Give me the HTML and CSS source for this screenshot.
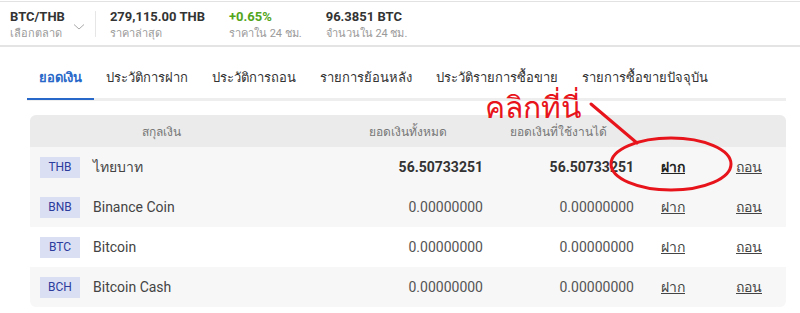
FILE: index.html
```html
<!DOCTYPE html>
<html lang="th">
<head>
    <meta charset="UTF-8">
    <meta name="viewport" content="width=device-width, initial-scale=1.0">
    <title>ยอดเงิน - BTC/THB</title>
    <link rel="stylesheet" href="styles.css">
</head>
<body>
    <!-- Market summary bar -->
    <header class="market-bar">
        <div class="market-picker">
            <div class="stat">
                <span class="stat-value">BTC/THB</span>
                <span class="stat-label">เลือกตลาด</span>
            </div>
            <svg class="chevron" width="12" height="8" viewBox="0 0 12 8">
                <path d="M1 1.5 L6 6 L11 1.5" fill="none" stroke="#aaa" stroke-width="1"/>
            </svg>
        </div>
        <div class="stat">
            <span class="stat-value">279,115.00 THB</span>
            <span class="stat-label">ราคาล่าสุด</span>
        </div>
        <div class="stat">
            <span class="stat-value up">+0.65%</span>
            <span class="stat-label">ราคาใน 24 ชม.</span>
        </div>
        <div class="stat">
            <span class="stat-value">96.3851 BTC</span>
            <span class="stat-label">จำนวนใน 24 ชม.</span>
        </div>
    </header>

    <main class="wallet">
        <nav class="tabs">
            <a href="#" class="tab active">ยอดเงิน</a>
            <a href="#" class="tab">ประวัติการฝาก</a>
            <a href="#" class="tab">ประวัติการถอน</a>
            <a href="#" class="tab">รายการย้อนหลัง</a>
            <a href="#" class="tab">ประวัติรายการซื้อขาย</a>
            <a href="#" class="tab">รายการซื้อขายปัจจุบัน</a>
        </nav>

        <div class="balances">
            <div class="row head">
                <div class="cell currency-head">สกุลเงิน</div>
                <div class="cell center">ยอดเงินทั้งหมด</div>
                <div class="cell center">ยอดเงินที่ใช้งานได้</div>
                <div class="cell"></div>
                <div class="cell"></div>
            </div>
            <div class="row shaded main-row">
                <div class="cell currency"><span class="badge">THB</span>ไทยบาท</div>
                <div class="cell num">56.50733251</div>
                <div class="cell num">56.50733251</div>
                <div class="cell"><a href="#" class="action strong">ฝาก</a></div>
                <div class="cell"><a href="#" class="action">ถอน</a></div>
            </div>
            <div class="row shaded">
                <div class="cell currency"><span class="badge">BNB</span>Binance Coin</div>
                <div class="cell num">0.00000000</div>
                <div class="cell num">0.00000000</div>
                <div class="cell"><a href="#" class="action">ฝาก</a></div>
                <div class="cell"><a href="#" class="action">ถอน</a></div>
            </div>
            <div class="row">
                <div class="cell currency"><span class="badge">BTC</span>Bitcoin</div>
                <div class="cell num">0.00000000</div>
                <div class="cell num">0.00000000</div>
                <div class="cell"><a href="#" class="action">ฝาก</a></div>
                <div class="cell"><a href="#" class="action">ถอน</a></div>
            </div>
            <div class="row shaded">
                <div class="cell currency"><span class="badge">BCH</span>Bitcoin Cash</div>
                <div class="cell num">0.00000000</div>
                <div class="cell num">0.00000000</div>
                <div class="cell"><a href="#" class="action">ฝาก</a></div>
                <div class="cell"><a href="#" class="action">ถอน</a></div>
            </div>
        </div>
    </main>

    <!-- Hand-drawn hint on top of the page -->
    <div class="hint">
        <span class="hint-text">คลิกที่นี่</span>
        <svg class="hint-marks" width="800" height="313" viewBox="0 0 800 313">
            <line x1="591" y1="104" x2="637" y2="143" stroke="#e8141c" stroke-width="3" stroke-linecap="round"/>
            <ellipse cx="671" cy="164" rx="60" ry="26" fill="none" stroke="#e8141c" stroke-width="3"/>
        </svg>
    </div>
</body>
</html>
```

FILE: styles.css
```css
/* Global */
body {
    margin: 0;
    padding: 0;
    background-color: #fff;
    color: #333;
    font-family: Roboto, "Noto Sans", sans-serif;
    position: relative;
    overflow: hidden;
}

a {
    color: inherit;
    text-decoration: none;
}

/* Market bar */
.market-bar {
    display: flex;
    align-items: center;
    height: 43px;
    margin-top: 1px;
    padding: 0 10px;
    border-top: 1px solid #e2e2e2;
    border-bottom: 2px solid #e4e4e4;
}

.market-picker {
    display: flex;
    align-items: center;
    gap: 8px;
    padding-right: 10px;
    margin-right: 14px;
    border-right: 1px solid #e6e6e6;
    height: 26px;
}

.market-bar > .stat + .stat {
    margin-left: 24px;
}

.chevron {
    margin-top: 6px;
}

.stat {
    display: flex;
    flex-direction: column;
    line-height: 17px;
    margin-top: 3px;
}

.stat-value {
    font-size: 13px;
    font-weight: bold;
    color: #333;
}

.stat-value.up {
    color: #52a51c;
}

.stat-label {
    font-size: 11px;
    color: #9a9a9a;
}

/* Wallet */
.wallet {
    padding: 0 14px 0 27px;
}

.tabs {
    display: flex;
    margin-top: 19px;
    border-bottom: 3px solid #eeeeee;
}

.tab {
    padding: 0 12px;
    height: 32px;
    line-height: 24px;
    font-size: 13px;
    white-space: nowrap;
    color: #333;
    border-bottom: 2px solid transparent;
    margin-bottom: -2px;
}

.tab.active {
    color: #2868c8;
    font-weight: bold;
    border-bottom-color: #2868c8;
}

/* Balance table */
.balances {
    margin: 14px 0 0 3px;
    border-radius: 6px;
    overflow: hidden;
}

.row {
    display: grid;
    grid-template-columns: 303px 150px 151px 75px 1fr;
    align-items: center;
    height: 40px;
    font-size: 14px;
    color: #555;
}

.row.head {
    height: 32px;
    background-color: #ebebeb;
    font-size: 12px;
    color: #777;
}

.row.shaded {
    background-color: #f7f7f7;
}

.cell.center {
    text-align: center;
}

.currency-head {
    text-align: center;
    padding-right: 41px;
}

.currency {
    display: flex;
    align-items: center;
    gap: 13px;
    padding-left: 10px;
    color: #444;
}

.badge {
    width: 40px;
    height: 21px;
    line-height: 21px;
    text-align: center;
    font-size: 12px;
    background-color: #dadff4;
    color: #2c3c9c;
}

.num {
    text-align: right;
}

.main-row .num {
    font-weight: bold;
    color: #333;
}

.action {
    padding-left: 27px;
    text-decoration: underline;
    color: #444;
}

.action.strong {
    font-weight: bold;
    color: #222;
}

/* Hint overlay */
.hint {
    position: absolute;
    top: 0;
    left: 0;
    width: 800px;
    height: 313px;
    pointer-events: none;
}

.hint-marks {
    position: absolute;
    top: 0;
    left: 0;
}

.hint-text {
    position: absolute;
    left: 485px;
    top: 84px;
    font-size: 30px;
    color: #e8141c;
}
```
